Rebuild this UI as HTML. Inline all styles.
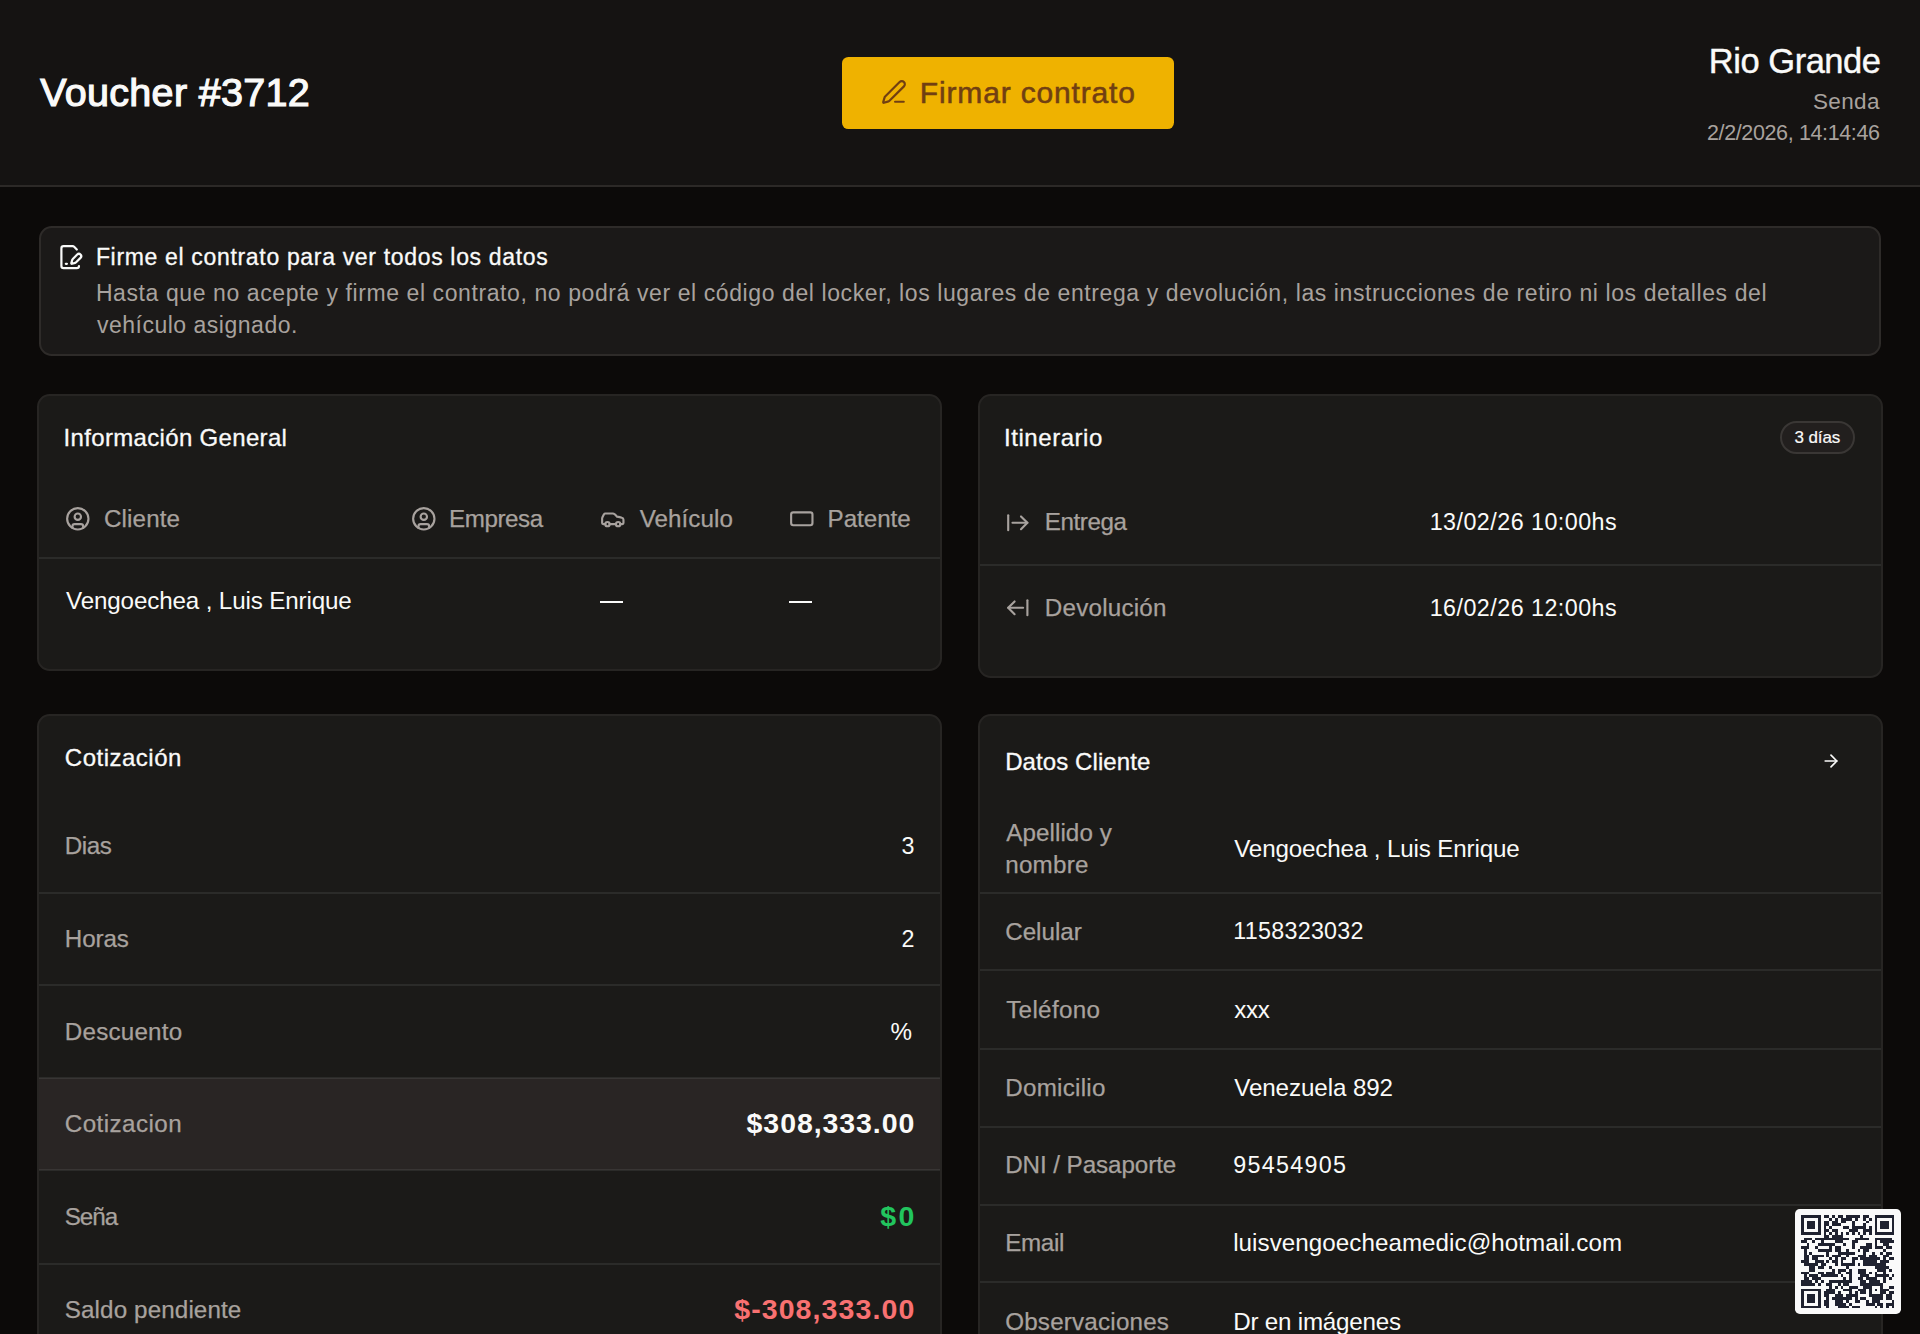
<!DOCTYPE html>
<html><head><meta charset="utf-8"><title>Voucher #3712</title><style>
*{margin:0;padding:0;box-sizing:border-box}
html,body{width:1920px;height:1334px;overflow:hidden;background:#0c0a09;font-family:"Liberation Sans",sans-serif}
.t{position:absolute;white-space:nowrap;line-height:1}
.ic{position:absolute;overflow:visible}
.hl{position:absolute}
#hdr{position:absolute;left:0;top:0;width:1920px;height:187px;background:#151312;border-bottom:2px solid #2c2927}
#btn{position:absolute;left:842px;top:57px;width:332px;height:71.5px;background:#efb200;border-radius:6.4px}
#notice{position:absolute;left:39px;top:226px;width:1842px;height:130px;background:#1b1918;border:2px solid #2e2b29;border-radius:12.8px}
.card{position:absolute;background:#1b1a18;border:2px solid #272523;border-radius:12.8px;overflow:hidden}
#badge{position:absolute;left:1779.5px;top:421px;width:75.5px;height:33px;border:2px solid #3a3735;background:#221f1e;border-radius:20px}
#hilite{position:absolute;left:39px;top:1078px;width:901px;height:92.4px;background:#292524}
#qr{position:absolute;left:1795px;top:1209px;width:106px;height:105px;background:#fafafa;border-radius:4.8px;padding:6.4px 6.3px}
#qr svg{display:block}
.dash{position:absolute;height:2px;background:#fafaf9}
</style></head><body>
<div id="hdr"></div>
<div id="btn"></div>
<div id="notice"></div>
<div class="card" style="left:37px;top:393.5px;width:905px;height:277px"></div>
<div class="card" style="left:978px;top:393.5px;width:905px;height:284.5px"></div>
<div class="card" style="left:37px;top:714px;width:905px;height:700px"></div>
<div class="card" style="left:978px;top:714px;width:905px;height:700px"></div>
<div id="hilite"></div>
<div class="hl" style="left:39px;width:901px;top:557.0px;height:2px;background:rgba(255,255,255,0.075)"></div>
<div class="hl" style="left:980px;width:901px;top:564.0px;height:2px;background:rgba(255,255,255,0.075)"></div>
<div class="hl" style="left:39px;width:901px;top:891.5px;height:2px;background:rgba(255,255,255,0.075)"></div>
<div class="hl" style="left:39px;width:901px;top:984.0px;height:2px;background:rgba(255,255,255,0.075)"></div>
<div class="hl" style="left:39px;width:901px;top:1077.0px;height:2px;background:rgba(255,255,255,0.075)"></div>
<div class="hl" style="left:39px;width:901px;top:1169.4px;height:2px;background:rgba(255,255,255,0.075)"></div>
<div class="hl" style="left:39px;width:901px;top:1262.7px;height:2px;background:rgba(255,255,255,0.075)"></div>
<div class="hl" style="left:980px;width:901px;top:891.5px;height:2px;background:rgba(255,255,255,0.075)"></div>
<div class="hl" style="left:980px;width:901px;top:969.4px;height:2px;background:rgba(255,255,255,0.075)"></div>
<div class="hl" style="left:980px;width:901px;top:1047.6px;height:2px;background:rgba(255,255,255,0.075)"></div>
<div class="hl" style="left:980px;width:901px;top:1125.5px;height:2px;background:rgba(255,255,255,0.075)"></div>
<div class="hl" style="left:980px;width:901px;top:1203.5px;height:2px;background:rgba(255,255,255,0.075)"></div>
<div class="hl" style="left:980px;width:901px;top:1281.4px;height:2px;background:rgba(255,255,255,0.075)"></div>
<div id="badge"></div>
<div class="dash" style="left:600px;width:23px;top:601px"></div>
<div class="dash" style="left:788.6px;width:23px;top:601px"></div>
<svg class="ic" style="left:881.3px;top:79.0px;width:26px;height:26px" viewBox="0 0 24 24" fill="none" stroke="#713f12" stroke-width="2" stroke-linecap="round" stroke-linejoin="round"><path d="M13 21h8"/><path d="M21.174 6.812a1 1 0 0 0-3.986-3.987L3.842 16.174a2 2 0 0 0-.5.83l-1.321 4.352a.5.5 0 0 0 .623.622l4.353-1.32a2 2 0 0 0 .83-.497z"/></svg>
<svg class="ic" style="left:56.7px;top:243.7px;width:26.4px;height:26.4px" viewBox="0 0 24 24" fill="none" stroke="#fafaf9" stroke-width="2" stroke-linecap="round" stroke-linejoin="round"><path d="m18 5-2.414-2.414A2 2 0 0 0 14.172 2H6a2 2 0 0 0-2 2v16a2 2 0 0 0 2 2h12a2 2 0 0 0 2-2"/><path d="M21.378 12.626a1 1 0 0 0-3.004-3.004l-4.01 4.012a2 2 0 0 0-.506.854l-.837 2.87a.5.5 0 0 0 .62.62l2.87-.837a2 2 0 0 0 .854-.506z"/><path d="M8 18h1"/></svg>
<svg class="ic" style="left:64.9px;top:505.9px;width:25.6px;height:25.6px" viewBox="0 0 24 24" fill="none" stroke="#a8a29e" stroke-width="2" stroke-linecap="round" stroke-linejoin="round"><circle cx="12" cy="12" r="10"/><circle cx="12" cy="10" r="3"/><path d="M7 20.662V19a2 2 0 0 1 2-2h6a2 2 0 0 1 2 2v1.662"/></svg>
<svg class="ic" style="left:410.6px;top:505.9px;width:25.6px;height:25.6px" viewBox="0 0 24 24" fill="none" stroke="#a8a29e" stroke-width="2" stroke-linecap="round" stroke-linejoin="round"><circle cx="12" cy="12" r="10"/><circle cx="12" cy="10" r="3"/><path d="M7 20.662V19a2 2 0 0 1 2-2h6a2 2 0 0 1 2 2v1.662"/></svg>
<svg class="ic" style="left:599.9px;top:506.3px;width:25.6px;height:25.6px" viewBox="0 0 24 24" fill="none" stroke="#a8a29e" stroke-width="2" stroke-linecap="round" stroke-linejoin="round"><path d="M19 17h2c.6 0 1-.4 1-1v-3c0-.9-.7-1.7-1.5-1.9C18.7 10.6 16 10 16 10s-1.3-1.4-2.2-2.3c-.5-.4-1.1-.7-1.8-.7H5c-.6 0-1.1.4-1.4.9l-1.4 2.9A3.7 3.7 0 0 0 2 12v4c0 .6.4 1 1 1h2"/><circle cx="7" cy="17" r="2"/><path d="M9 17h6"/><circle cx="17" cy="17" r="2"/></svg>
<svg class="ic" style="left:788.9px;top:506.2px;width:25.6px;height:25.6px" viewBox="0 0 24 24" fill="none" stroke="#a8a29e" stroke-width="2" stroke-linecap="round" stroke-linejoin="round"><rect width="20" height="12" x="2" y="6" rx="2"/></svg>
<svg class="ic" style="left:1005.4px;top:509.5px;width:25.6px;height:25.6px" viewBox="0 0 24 24" fill="none" stroke="#a8a29e" stroke-width="2" stroke-linecap="round" stroke-linejoin="round"><path d="M3 5v14"/><path d="M21 12H7"/><path d="m15 18 6-6-6-6"/></svg>
<svg class="ic" style="left:1005.4px;top:595.0px;width:25.6px;height:25.6px" viewBox="0 0 24 24" fill="none" stroke="#a8a29e" stroke-width="2" stroke-linecap="round" stroke-linejoin="round"><path d="m9 6-6 6 6 6"/><path d="M3 12h14"/><path d="M21 19V5"/></svg>
<svg class="ic" style="left:1820.5px;top:750.8px;width:20px;height:20px" viewBox="0 0 24 24" fill="none" stroke="#fafaf9" stroke-width="2" stroke-linecap="round" stroke-linejoin="round"><path d="M5 12h14"/><path d="m12 5 7 7-7 7"/></svg>
<div class="t" id="t_voucher" style="left:40.2px;top:73.2px;font-size:39.5px;font-weight:400;color:#fafaf9;letter-spacing:0.318px;-webkit-text-stroke:1.2px #fafaf9">Voucher #3712</div>
<div class="t" id="t_btn" style="left:919.8px;top:77.8px;font-size:30.0px;font-weight:400;color:#713f12;letter-spacing:0.843px;-webkit-text-stroke:0.55px currentColor">Firmar contrato</div>
<div class="t" id="t_rio" style="left:1708.8px;top:44.1px;font-size:34.5px;font-weight:400;color:#fafaf9;letter-spacing:-0.471px;-webkit-text-stroke:0.4px currentColor">Rio Grande</div>
<div class="t" id="t_senda" style="left:1813.0px;top:90.7px;font-size:22.5px;font-weight:400;color:#a8a29e;letter-spacing:0.363px">Senda</div>
<div class="t" id="t_date" style="left:1707.0px;top:122.8px;font-size:21.5px;font-weight:400;color:#a8a29e;letter-spacing:-0.375px">2/2/2026, 14:14:46</div>
<div class="t" id="t_ntitle" style="left:95.9px;top:246.2px;font-size:23px;font-weight:400;color:#fafaf9;letter-spacing:0.670px;-webkit-text-stroke:0.3px currentColor">Firme el contrato para ver todos los datos</div>
<div class="t" id="t_nbody1" style="left:95.9px;top:281.8px;font-size:23px;font-weight:400;color:#a8a29e;letter-spacing:0.593px">Hasta que no acepte y firme el contrato, no podrá ver el código del locker, los lugares de entrega y devolución, las instrucciones de retiro ni los detalles del</div>
<div class="t" id="t_nbody2" style="left:96.9px;top:314.3px;font-size:23px;font-weight:400;color:#a8a29e;letter-spacing:0.511px">vehículo asignado.</div>
<div class="t" id="t_info" style="left:63.6px;top:426.1px;font-size:24px;font-weight:400;color:#fafaf9;letter-spacing:0.327px;-webkit-text-stroke:0.3px currentColor">Información General</div>
<div class="t" id="t_cliente" style="left:104.0px;top:506.8px;font-size:24.2px;font-weight:400;color:#a8a29e;letter-spacing:0.127px;-webkit-text-stroke:0.25px currentColor">Cliente</div>
<div class="t" id="t_empresa" style="left:449.0px;top:506.8px;font-size:24.2px;font-weight:400;color:#a8a29e;letter-spacing:-0.439px;-webkit-text-stroke:0.25px currentColor">Empresa</div>
<div class="t" id="t_vehiculo" style="left:639.7px;top:506.8px;font-size:24.2px;font-weight:400;color:#a8a29e;letter-spacing:0.051px;-webkit-text-stroke:0.25px currentColor">Vehículo</div>
<div class="t" id="t_patente" style="left:827.6px;top:506.8px;font-size:24.2px;font-weight:400;color:#a8a29e;letter-spacing:-0.055px;-webkit-text-stroke:0.25px currentColor">Patente</div>
<div class="t" id="t_name1" style="left:66.0px;top:588.8px;font-size:24.2px;font-weight:400;color:#fafaf9;letter-spacing:-0.141px">Vengoechea , Luis Enrique</div>
<div class="t" id="t_itin" style="left:1004.0px;top:425.9px;font-size:24px;font-weight:400;color:#fafaf9;letter-spacing:0.553px;-webkit-text-stroke:0.3px currentColor">Itinerario</div>
<div class="t" id="t_badge" style="left:1794.4px;top:429.4px;font-size:17px;font-weight:400;color:#fafaf9;letter-spacing:-0.082px;-webkit-text-stroke:0.2px currentColor">3 días</div>
<div class="t" id="t_entrega" style="left:1044.8px;top:510.3px;font-size:24.2px;font-weight:400;color:#a8a29e;letter-spacing:-0.419px;-webkit-text-stroke:0.25px currentColor">Entrega</div>
<div class="t" id="t_devol" style="left:1044.8px;top:595.8px;font-size:24.2px;font-weight:400;color:#a8a29e;letter-spacing:0.227px;-webkit-text-stroke:0.25px currentColor">Devolución</div>
<div class="t" id="t_d1" style="left:1429.7px;top:510.8px;font-size:23.3px;font-weight:400;color:#fafaf9;letter-spacing:0.459px">13/02/26 10:00hs</div>
<div class="t" id="t_d2" style="left:1429.7px;top:596.8px;font-size:23.3px;font-weight:400;color:#fafaf9;letter-spacing:0.459px">16/02/26 12:00hs</div>
<div class="t" id="t_cotiz" style="left:64.8px;top:746.4px;font-size:24px;font-weight:400;color:#fafaf9;letter-spacing:0.505px;-webkit-text-stroke:0.3px currentColor">Cotización</div>
<div class="t" id="t_dias" style="left:64.8px;top:833.8px;font-size:24.2px;font-weight:400;color:#a8a29e;letter-spacing:-0.431px;-webkit-text-stroke:0.25px currentColor">Dias</div>
<div class="t" id="t_horas" style="left:64.8px;top:926.5px;font-size:24.2px;font-weight:400;color:#a8a29e;letter-spacing:-0.106px;-webkit-text-stroke:0.25px currentColor">Horas</div>
<div class="t" id="t_desc" style="left:64.8px;top:1019.9px;font-size:24.2px;font-weight:400;color:#a8a29e;letter-spacing:0.208px;-webkit-text-stroke:0.25px currentColor">Descuento</div>
<div class="t" id="t_cotiz2" style="left:64.8px;top:1112.3px;font-size:24.2px;font-weight:400;color:#a8a29e;letter-spacing:0.441px;-webkit-text-stroke:0.25px currentColor">Cotizacion</div>
<div class="t" id="t_sena" style="left:64.8px;top:1204.8px;font-size:24.2px;font-weight:400;color:#a8a29e;letter-spacing:-1.062px;-webkit-text-stroke:0.25px currentColor">Seña</div>
<div class="t" id="t_saldo" style="left:64.8px;top:1297.7px;font-size:24.2px;font-weight:400;color:#a8a29e;letter-spacing:0.119px;-webkit-text-stroke:0.25px currentColor">Saldo pendiente</div>
<div class="t" id="v_3" style="left:901.6px;top:834.8px;font-size:23.3px;font-weight:400;color:#fafaf9;letter-spacing:0.000px">3</div>
<div class="t" id="v_2" style="left:901.6px;top:927.8px;font-size:23.3px;font-weight:400;color:#fafaf9;letter-spacing:0.000px">2</div>
<div class="t" id="v_pct" style="left:890.6px;top:1019.9px;font-size:24.2px;font-weight:400;color:#fafaf9;letter-spacing:0.000px">%</div>
<div class="t" id="v_cot" style="left:746.6px;top:1109.4px;font-size:28.5px;font-weight:700;color:#fafaf9;letter-spacing:0.916px">$308,333.00</div>
<div class="t" id="v_sena" style="left:880.3px;top:1201.9px;font-size:28.5px;font-weight:700;color:#22c55e;letter-spacing:2.250px">$0</div>
<div class="t" id="v_saldo" style="left:734.2px;top:1295.1px;font-size:28.5px;font-weight:700;color:#f87171;letter-spacing:1.097px">$-308,333.00</div>
<div class="t" id="t_datos" style="left:1005.2px;top:749.7px;font-size:24px;font-weight:400;color:#fafaf9;letter-spacing:0.086px;-webkit-text-stroke:0.3px currentColor">Datos Cliente</div>
<div class="t" id="l_ape1" style="left:1006.2px;top:821.3px;font-size:24.2px;font-weight:400;color:#a8a29e;letter-spacing:0.085px;-webkit-text-stroke:0.25px currentColor">Apellido y</div>
<div class="t" id="l_ape2" style="left:1005.2px;top:852.8px;font-size:24.2px;font-weight:400;color:#a8a29e;letter-spacing:0.258px;-webkit-text-stroke:0.25px currentColor">nombre</div>
<div class="t" id="l_cel" style="left:1005.2px;top:919.5px;font-size:24.2px;font-weight:400;color:#a8a29e;letter-spacing:-0.003px;-webkit-text-stroke:0.25px currentColor">Celular</div>
<div class="t" id="l_tel" style="left:1006.2px;top:997.5px;font-size:24.2px;font-weight:400;color:#a8a29e;letter-spacing:0.337px;-webkit-text-stroke:0.25px currentColor">Teléfono</div>
<div class="t" id="l_dom" style="left:1005.2px;top:1075.5px;font-size:24.2px;font-weight:400;color:#a8a29e;letter-spacing:0.262px;-webkit-text-stroke:0.25px currentColor">Domicilio</div>
<div class="t" id="l_dni" style="left:1005.2px;top:1153.1px;font-size:24.2px;font-weight:400;color:#a8a29e;letter-spacing:-0.070px;-webkit-text-stroke:0.25px currentColor">DNI / Pasaporte</div>
<div class="t" id="l_email" style="left:1005.2px;top:1231.1px;font-size:24.2px;font-weight:400;color:#a8a29e;letter-spacing:-0.339px;-webkit-text-stroke:0.25px currentColor">Email</div>
<div class="t" id="l_obs" style="left:1005.2px;top:1310.1px;font-size:24.2px;font-weight:400;color:#a8a29e;letter-spacing:0.201px;-webkit-text-stroke:0.25px currentColor">Observaciones</div>
<div class="t" id="d_name" style="left:1234.2px;top:837.1px;font-size:24.2px;font-weight:400;color:#fafaf9;letter-spacing:-0.149px">Vengoechea , Luis Enrique</div>
<div class="t" id="d_cel" style="left:1233.2px;top:919.9px;font-size:23.3px;font-weight:400;color:#fafaf9;letter-spacing:0.280px">1158323032</div>
<div class="t" id="d_tel" style="left:1234.2px;top:997.5px;font-size:24.2px;font-weight:400;color:#fafaf9;letter-spacing:-0.294px">xxx</div>
<div class="t" id="d_dom" style="left:1234.2px;top:1075.5px;font-size:24.2px;font-weight:400;color:#fafaf9;letter-spacing:-0.100px">Venezuela 892</div>
<div class="t" id="d_dni" style="left:1233.2px;top:1153.9px;font-size:23.3px;font-weight:400;color:#fafaf9;letter-spacing:1.301px">95454905</div>
<div class="t" id="d_email" style="left:1233.2px;top:1231.1px;font-size:24.2px;font-weight:400;color:#fafaf9;letter-spacing:0.046px">luisvengoecheamedic@hotmail.com</div>
<div class="t" id="d_obs" style="left:1233.2px;top:1310.1px;font-size:24.2px;font-weight:400;color:#fafaf9;letter-spacing:-0.219px">Dr en imágenes</div>
<div id="qr"><svg viewBox="0 0 33 33" width="93.4" height="93.4" shape-rendering="crispEdges"><path d="M0 0h1v1h-1zM1 0h1v1h-1zM2 0h1v1h-1zM3 0h1v1h-1zM4 0h1v1h-1zM5 0h1v1h-1zM6 0h1v1h-1zM8 0h1v1h-1zM9 0h1v1h-1zM11 0h1v1h-1zM13 0h1v1h-1zM14 0h1v1h-1zM16 0h1v1h-1zM17 0h1v1h-1zM18 0h1v1h-1zM19 0h1v1h-1zM20 0h1v1h-1zM22 0h1v1h-1zM23 0h1v1h-1zM26 0h1v1h-1zM27 0h1v1h-1zM28 0h1v1h-1zM29 0h1v1h-1zM30 0h1v1h-1zM31 0h1v1h-1zM32 0h1v1h-1zM0 1h1v1h-1zM6 1h1v1h-1zM10 1h1v1h-1zM12 1h1v1h-1zM14 1h1v1h-1zM15 1h1v1h-1zM16 1h1v1h-1zM17 1h1v1h-1zM19 1h1v1h-1zM22 1h1v1h-1zM24 1h1v1h-1zM26 1h1v1h-1zM32 1h1v1h-1zM0 2h1v1h-1zM2 2h1v1h-1zM3 2h1v1h-1zM4 2h1v1h-1zM6 2h1v1h-1zM8 2h1v1h-1zM9 2h1v1h-1zM11 2h1v1h-1zM12 2h1v1h-1zM14 2h1v1h-1zM15 2h1v1h-1zM18 2h1v1h-1zM23 2h1v1h-1zM26 2h1v1h-1zM28 2h1v1h-1zM29 2h1v1h-1zM30 2h1v1h-1zM32 2h1v1h-1zM0 3h1v1h-1zM2 3h1v1h-1zM3 3h1v1h-1zM4 3h1v1h-1zM6 3h1v1h-1zM8 3h1v1h-1zM9 3h1v1h-1zM11 3h1v1h-1zM12 3h1v1h-1zM13 3h1v1h-1zM18 3h1v1h-1zM22 3h1v1h-1zM26 3h1v1h-1zM28 3h1v1h-1zM29 3h1v1h-1zM30 3h1v1h-1zM32 3h1v1h-1zM0 4h1v1h-1zM2 4h1v1h-1zM3 4h1v1h-1zM4 4h1v1h-1zM6 4h1v1h-1zM8 4h1v1h-1zM10 4h1v1h-1zM15 4h1v1h-1zM16 4h1v1h-1zM18 4h1v1h-1zM19 4h1v1h-1zM20 4h1v1h-1zM21 4h1v1h-1zM22 4h1v1h-1zM24 4h1v1h-1zM26 4h1v1h-1zM28 4h1v1h-1zM29 4h1v1h-1zM30 4h1v1h-1zM32 4h1v1h-1zM0 5h1v1h-1zM6 5h1v1h-1zM8 5h1v1h-1zM9 5h1v1h-1zM11 5h1v1h-1zM12 5h1v1h-1zM17 5h1v1h-1zM18 5h1v1h-1zM19 5h1v1h-1zM22 5h1v1h-1zM23 5h1v1h-1zM24 5h1v1h-1zM26 5h1v1h-1zM32 5h1v1h-1zM0 6h1v1h-1zM1 6h1v1h-1zM2 6h1v1h-1zM3 6h1v1h-1zM4 6h1v1h-1zM5 6h1v1h-1zM6 6h1v1h-1zM8 6h1v1h-1zM10 6h1v1h-1zM12 6h1v1h-1zM14 6h1v1h-1zM16 6h1v1h-1zM18 6h1v1h-1zM20 6h1v1h-1zM22 6h1v1h-1zM24 6h1v1h-1zM26 6h1v1h-1zM27 6h1v1h-1zM28 6h1v1h-1zM29 6h1v1h-1zM30 6h1v1h-1zM31 6h1v1h-1zM32 6h1v1h-1zM8 7h1v1h-1zM9 7h1v1h-1zM11 7h1v1h-1zM12 7h1v1h-1zM13 7h1v1h-1zM14 7h1v1h-1zM21 7h1v1h-1zM1 8h1v1h-1zM2 8h1v1h-1zM3 8h1v1h-1zM5 8h1v1h-1zM6 8h1v1h-1zM7 8h1v1h-1zM8 8h1v1h-1zM9 8h1v1h-1zM10 8h1v1h-1zM11 8h1v1h-1zM12 8h1v1h-1zM13 8h1v1h-1zM14 8h1v1h-1zM15 8h1v1h-1zM16 8h1v1h-1zM19 8h1v1h-1zM20 8h1v1h-1zM21 8h1v1h-1zM22 8h1v1h-1zM23 8h1v1h-1zM26 8h1v1h-1zM27 8h1v1h-1zM28 8h1v1h-1zM29 8h1v1h-1zM30 8h1v1h-1zM31 8h1v1h-1zM0 9h1v1h-1zM1 9h1v1h-1zM4 9h1v1h-1zM7 9h1v1h-1zM12 9h1v1h-1zM13 9h1v1h-1zM14 9h1v1h-1zM18 9h1v1h-1zM19 9h1v1h-1zM26 9h1v1h-1zM28 9h1v1h-1zM29 9h1v1h-1zM30 9h1v1h-1zM31 9h1v1h-1zM32 9h1v1h-1zM2 10h1v1h-1zM6 10h1v1h-1zM7 10h1v1h-1zM8 10h1v1h-1zM9 10h1v1h-1zM10 10h1v1h-1zM11 10h1v1h-1zM15 10h1v1h-1zM18 10h1v1h-1zM23 10h1v1h-1zM24 10h1v1h-1zM26 10h1v1h-1zM29 10h1v1h-1zM30 10h1v1h-1zM0 11h1v1h-1zM1 11h1v1h-1zM2 11h1v1h-1zM5 11h1v1h-1zM10 11h1v1h-1zM12 11h1v1h-1zM13 11h1v1h-1zM18 11h1v1h-1zM21 11h1v1h-1zM22 11h1v1h-1zM23 11h1v1h-1zM24 11h1v1h-1zM26 11h1v1h-1zM27 11h1v1h-1zM28 11h1v1h-1zM30 11h1v1h-1zM31 11h1v1h-1zM1 12h1v1h-1zM6 12h1v1h-1zM7 12h1v1h-1zM8 12h1v1h-1zM9 12h1v1h-1zM10 12h1v1h-1zM12 12h1v1h-1zM13 12h1v1h-1zM16 12h1v1h-1zM20 12h1v1h-1zM22 12h1v1h-1zM23 12h1v1h-1zM29 12h1v1h-1zM1 13h1v1h-1zM3 13h1v1h-1zM9 13h1v1h-1zM13 13h1v1h-1zM14 13h1v1h-1zM15 13h1v1h-1zM16 13h1v1h-1zM17 13h1v1h-1zM18 13h1v1h-1zM22 13h1v1h-1zM25 13h1v1h-1zM28 13h1v1h-1zM30 13h1v1h-1zM31 13h1v1h-1zM1 14h1v1h-1zM2 14h1v1h-1zM4 14h1v1h-1zM5 14h1v1h-1zM6 14h1v1h-1zM7 14h1v1h-1zM9 14h1v1h-1zM11 14h1v1h-1zM12 14h1v1h-1zM13 14h1v1h-1zM16 14h1v1h-1zM20 14h1v1h-1zM21 14h1v1h-1zM22 14h1v1h-1zM24 14h1v1h-1zM25 14h1v1h-1zM26 14h1v1h-1zM29 14h1v1h-1zM30 14h1v1h-1zM1 15h1v1h-1zM2 15h1v1h-1zM4 15h1v1h-1zM5 15h1v1h-1zM10 15h1v1h-1zM12 15h1v1h-1zM14 15h1v1h-1zM15 15h1v1h-1zM18 15h1v1h-1zM19 15h1v1h-1zM21 15h1v1h-1zM22 15h1v1h-1zM23 15h1v1h-1zM24 15h1v1h-1zM25 15h1v1h-1zM26 15h1v1h-1zM27 15h1v1h-1zM29 15h1v1h-1zM31 15h1v1h-1zM32 15h1v1h-1zM0 16h1v1h-1zM1 16h1v1h-1zM2 16h1v1h-1zM5 16h1v1h-1zM6 16h1v1h-1zM7 16h1v1h-1zM9 16h1v1h-1zM11 16h1v1h-1zM12 16h1v1h-1zM14 16h1v1h-1zM18 16h1v1h-1zM22 16h1v1h-1zM23 16h1v1h-1zM24 16h1v1h-1zM25 16h1v1h-1zM26 16h1v1h-1zM28 16h1v1h-1zM29 16h1v1h-1zM30 16h1v1h-1zM1 17h1v1h-1zM2 17h1v1h-1zM3 17h1v1h-1zM4 17h1v1h-1zM5 17h1v1h-1zM7 17h1v1h-1zM8 17h1v1h-1zM12 17h1v1h-1zM14 17h1v1h-1zM15 17h1v1h-1zM16 17h1v1h-1zM17 17h1v1h-1zM18 17h1v1h-1zM20 17h1v1h-1zM22 17h1v1h-1zM23 17h1v1h-1zM24 17h1v1h-1zM25 17h1v1h-1zM26 17h1v1h-1zM27 17h1v1h-1zM28 17h1v1h-1zM29 17h1v1h-1zM3 18h1v1h-1zM4 18h1v1h-1zM6 18h1v1h-1zM7 18h1v1h-1zM10 18h1v1h-1zM16 18h1v1h-1zM26 18h1v1h-1zM27 18h1v1h-1zM28 18h1v1h-1zM29 18h1v1h-1zM30 18h1v1h-1zM3 19h1v1h-1zM4 19h1v1h-1zM11 19h1v1h-1zM13 19h1v1h-1zM14 19h1v1h-1zM15 19h1v1h-1zM17 19h1v1h-1zM20 19h1v1h-1zM21 19h1v1h-1zM22 19h1v1h-1zM27 19h1v1h-1zM28 19h1v1h-1zM29 19h1v1h-1zM31 19h1v1h-1zM0 20h1v1h-1zM1 20h1v1h-1zM2 20h1v1h-1zM6 20h1v1h-1zM7 20h1v1h-1zM9 20h1v1h-1zM10 20h1v1h-1zM11 20h1v1h-1zM13 20h1v1h-1zM16 20h1v1h-1zM17 20h1v1h-1zM20 20h1v1h-1zM21 20h1v1h-1zM22 20h1v1h-1zM24 20h1v1h-1zM26 20h1v1h-1zM29 20h1v1h-1zM1 21h1v1h-1zM3 21h1v1h-1zM4 21h1v1h-1zM5 21h1v1h-1zM7 21h1v1h-1zM8 21h1v1h-1zM9 21h1v1h-1zM10 21h1v1h-1zM11 21h1v1h-1zM12 21h1v1h-1zM14 21h1v1h-1zM17 21h1v1h-1zM21 21h1v1h-1zM22 21h1v1h-1zM23 21h1v1h-1zM26 21h1v1h-1zM27 21h1v1h-1zM28 21h1v1h-1zM29 21h1v1h-1zM30 21h1v1h-1zM32 21h1v1h-1zM1 22h1v1h-1zM2 22h1v1h-1zM4 22h1v1h-1zM5 22h1v1h-1zM6 22h1v1h-1zM15 22h1v1h-1zM17 22h1v1h-1zM20 22h1v1h-1zM21 22h1v1h-1zM23 22h1v1h-1zM24 22h1v1h-1zM25 22h1v1h-1zM26 22h1v1h-1zM29 22h1v1h-1zM31 22h1v1h-1zM0 23h1v1h-1zM1 23h1v1h-1zM2 23h1v1h-1zM3 23h1v1h-1zM5 23h1v1h-1zM7 23h1v1h-1zM10 23h1v1h-1zM11 23h1v1h-1zM12 23h1v1h-1zM13 23h1v1h-1zM14 23h1v1h-1zM15 23h1v1h-1zM16 23h1v1h-1zM17 23h1v1h-1zM21 23h1v1h-1zM22 23h1v1h-1zM24 23h1v1h-1zM25 23h1v1h-1zM26 23h1v1h-1zM27 23h1v1h-1zM29 23h1v1h-1zM0 24h1v1h-1zM1 24h1v1h-1zM2 24h1v1h-1zM3 24h1v1h-1zM4 24h1v1h-1zM6 24h1v1h-1zM9 24h1v1h-1zM10 24h1v1h-1zM13 24h1v1h-1zM15 24h1v1h-1zM16 24h1v1h-1zM21 24h1v1h-1zM22 24h1v1h-1zM23 24h1v1h-1zM24 24h1v1h-1zM25 24h1v1h-1zM26 24h1v1h-1zM27 24h1v1h-1zM28 24h1v1h-1zM10 25h1v1h-1zM12 25h1v1h-1zM14 25h1v1h-1zM17 25h1v1h-1zM18 25h1v1h-1zM19 25h1v1h-1zM22 25h1v1h-1zM23 25h1v1h-1zM24 25h1v1h-1zM28 25h1v1h-1zM31 25h1v1h-1zM32 25h1v1h-1zM0 26h1v1h-1zM1 26h1v1h-1zM2 26h1v1h-1zM3 26h1v1h-1zM4 26h1v1h-1zM5 26h1v1h-1zM6 26h1v1h-1zM9 26h1v1h-1zM10 26h1v1h-1zM11 26h1v1h-1zM15 26h1v1h-1zM16 26h1v1h-1zM17 26h1v1h-1zM20 26h1v1h-1zM21 26h1v1h-1zM22 26h1v1h-1zM24 26h1v1h-1zM26 26h1v1h-1zM28 26h1v1h-1zM29 26h1v1h-1zM30 26h1v1h-1zM0 27h1v1h-1zM6 27h1v1h-1zM8 27h1v1h-1zM9 27h1v1h-1zM10 27h1v1h-1zM11 27h1v1h-1zM13 27h1v1h-1zM17 27h1v1h-1zM19 27h1v1h-1zM21 27h1v1h-1zM22 27h1v1h-1zM24 27h1v1h-1zM28 27h1v1h-1zM29 27h1v1h-1zM31 27h1v1h-1zM32 27h1v1h-1zM0 28h1v1h-1zM2 28h1v1h-1zM3 28h1v1h-1zM4 28h1v1h-1zM6 28h1v1h-1zM8 28h1v1h-1zM9 28h1v1h-1zM12 28h1v1h-1zM13 28h1v1h-1zM14 28h1v1h-1zM16 28h1v1h-1zM17 28h1v1h-1zM18 28h1v1h-1zM19 28h1v1h-1zM24 28h1v1h-1zM25 28h1v1h-1zM26 28h1v1h-1zM27 28h1v1h-1zM28 28h1v1h-1zM30 28h1v1h-1zM31 28h1v1h-1zM0 29h1v1h-1zM2 29h1v1h-1zM3 29h1v1h-1zM4 29h1v1h-1zM6 29h1v1h-1zM9 29h1v1h-1zM11 29h1v1h-1zM12 29h1v1h-1zM13 29h1v1h-1zM14 29h1v1h-1zM15 29h1v1h-1zM16 29h1v1h-1zM17 29h1v1h-1zM19 29h1v1h-1zM21 29h1v1h-1zM22 29h1v1h-1zM25 29h1v1h-1zM26 29h1v1h-1zM27 29h1v1h-1zM28 29h1v1h-1zM30 29h1v1h-1zM31 29h1v1h-1zM0 30h1v1h-1zM2 30h1v1h-1zM3 30h1v1h-1zM4 30h1v1h-1zM6 30h1v1h-1zM8 30h1v1h-1zM9 30h1v1h-1zM12 30h1v1h-1zM13 30h1v1h-1zM14 30h1v1h-1zM16 30h1v1h-1zM19 30h1v1h-1zM20 30h1v1h-1zM23 30h1v1h-1zM25 30h1v1h-1zM26 30h1v1h-1zM27 30h1v1h-1zM32 30h1v1h-1zM0 31h1v1h-1zM6 31h1v1h-1zM8 31h1v1h-1zM9 31h1v1h-1zM12 31h1v1h-1zM13 31h1v1h-1zM14 31h1v1h-1zM15 31h1v1h-1zM17 31h1v1h-1zM23 31h1v1h-1zM24 31h1v1h-1zM25 31h1v1h-1zM27 31h1v1h-1zM28 31h1v1h-1zM30 31h1v1h-1zM31 31h1v1h-1zM32 31h1v1h-1zM0 32h1v1h-1zM1 32h1v1h-1zM2 32h1v1h-1zM3 32h1v1h-1zM4 32h1v1h-1zM5 32h1v1h-1zM6 32h1v1h-1zM9 32h1v1h-1zM13 32h1v1h-1zM14 32h1v1h-1zM15 32h1v1h-1zM16 32h1v1h-1zM18 32h1v1h-1zM19 32h1v1h-1zM20 32h1v1h-1zM26 32h1v1h-1zM28 32h1v1h-1zM30 32h1v1h-1zM32 32h1v1h-1z" fill="#1f2230"/></svg></div>
</body></html>
